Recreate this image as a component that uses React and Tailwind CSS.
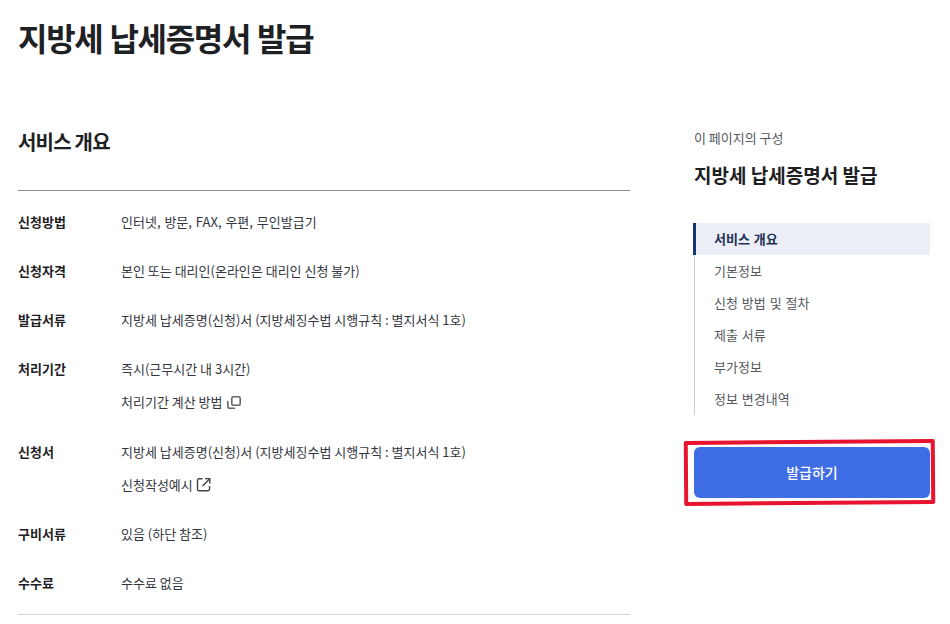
import React from 'react';

const font = "font-['Noto_Sans_CJK_KR',sans-serif]";

const navItems = ['기본정보', '신청 방법 및 절차', '제출 서류', '부가정보', '정보 변경내역'];

function CopyIcon() {
  return (
    <svg width="16" height="16" viewBox="0 0 16 16" fill="none" stroke="#666" strokeWidth="1.6" strokeLinecap="round" className="ml-[3px]">
      <rect x="5.8" y="2.8" width="8.4" height="8.4" rx="1.4" />
      <path d="M1.8 7.5v4.7a2 2 0 0 0 2 2H8.5" />
    </svg>
  );
}

function LinkIcon() {
  return (
    <svg width="16" height="16" viewBox="0 0 16 16" fill="none" stroke="#444" strokeWidth="1.4" className="ml-[3px]">
      <path d="M6.5 1.8H3a1.5 1.5 0 0 0-1.5 1.5v9A1.5 1.5 0 0 0 3 13.8h9a1.5 1.5 0 0 0 1.5-1.5V9" />
      <path d="M6.5 9 13.5 2" />
      <path d="M9 1.6h4.8v4.8" />
    </svg>
  );
}

function Row({ label, children, className }) {
  return (
    <div className={`flex ${className}`}>
      <div className="w-[103px] shrink-0 text-[13px] leading-[20px] font-bold text-[#1e2124]">{label}</div>
      <div className="flex flex-col gap-[13px] text-[13px] leading-[20px] text-[#33363d]">{children}</div>
    </div>
  );
}

export default function App() {
  return (
    <div className={`${font} w-[950px] h-[624px] overflow-hidden bg-white relative`}>
      <h1 className="pl-[18px] pt-[14px] text-[32px] leading-[46px] font-bold text-[#1e2124] tracking-[-1.3px] [word-spacing:1px]">
        지방세 납세증명서 발급
      </h1>
      <div className="flex pl-[18px] mt-[53px]">
        {/* Service overview */}
        <div className="w-[612px]">
          <h2 className="pt-[14px] text-[20px] leading-[30px] font-bold text-[#1e2124] tracking-[-0.8px]">서비스 개요</h2>
          <div className="mt-[33px] border-t border-[#8a8d92] pt-[21px] pb-[21px]">
            <Row label="신청방법" className="mb-[29px]">
              <p className="[word-spacing:1px]">인터넷, 방문, FAX, 우편, 무인발급기</p>
            </Row>
            <Row label="신청자격" className="mb-[29px]">
              <p>본인 또는 대리인(온라인은 대리인 신청 불가)</p>
            </Row>
            <Row label="발급서류" className="mb-[29px]">
              <p>지방세 납세증명(신청)서 (지방세징수법 시행규칙 : 별지서식 1호)</p>
            </Row>
            <Row label="처리기간" className="mb-[30px]">
              <p>즉시(근무시간 내 3시간)</p>
              <p className="flex items-center">처리기간 계산 방법 <CopyIcon /></p>
            </Row>
            <Row label="신청서" className="mb-[29px]">
              <p>지방세 납세증명(신청)서 (지방세징수법 시행규칙 : 별지서식 1호)</p>
              <p className="flex items-center">신청작성예시 <LinkIcon /></p>
            </Row>
            <Row label="구비서류" className="mb-[29px]">
              <p>있음 (하단 참조)</p>
            </Row>
            <Row label="수수료">
              <p>수수료 없음</p>
            </Row>
          </div>
          <div className="border-t border-[#d6d8db]" />
        </div>

        {/* Page outline */}
        <aside className="ml-[64px] w-[236px]">
          <p className="pt-[15px] text-[13px] leading-[20px] text-[#55585e]">이 페이지의 구성</p>
          <p className="mt-[13px] text-[19px] leading-[28px] font-bold text-[#1e2124]">지방세 납세증명서 발급</p>
          <nav className="mt-[34px] border-l border-[#c6d2e3] flex flex-col [word-spacing:1px]">
            <div className="-ml-[2px] h-[32px] flex items-center pl-[18px] border-l-[3px] border-[#153875] bg-[#ebeef4] text-[13px] font-bold text-[#1e3158]">
              서비스 개요
            </div>
            {navItems.map((item) => (
              <div key={item} className="h-[32px] flex items-center pl-[19px] text-[13px] text-[#55585e]">{item}</div>
            ))}
          </nav>
          <button className="mt-[32px] w-[236px] h-[51px] rounded-[6px] bg-[#3f6de5] text-white text-[14px] font-medium relative">
            발급하기
            {/* red annotation drawn over the button */}
            <span className="absolute -left-[10px] -top-[7px] w-[251px] h-[65px] border-[4px] border-[#e8142f] rounded-[2px] -rotate-[0.45deg]" />
          </button>
        </aside>
      </div>
    </div>
  );
}
